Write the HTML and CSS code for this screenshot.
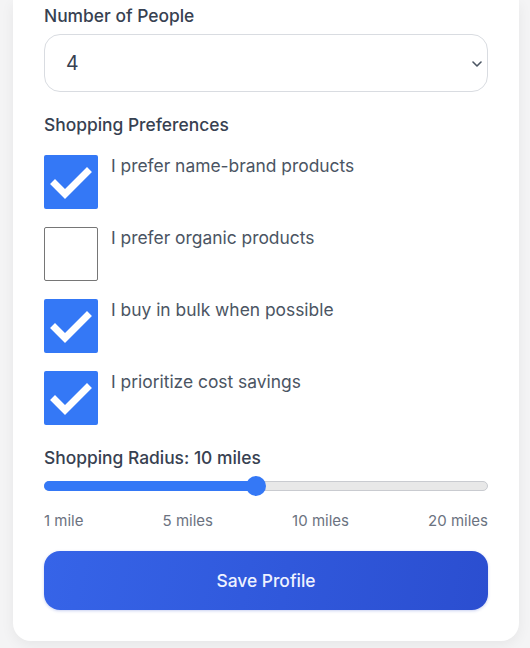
FILE: index.html
```html
<!DOCTYPE html>
<html lang="en">
<head>
<meta charset="utf-8">
<title>Profile</title>
<link rel="stylesheet" href="styles.css">
</head>
<body>
<div class="page">
  <div class="card">
    <div class="field">
      <div class="label">Number of People</div>
      <div class="select">
        <span class="select-value">4</span>
        <svg class="chev" width="10" height="6" viewBox="0 0 10 6"><path d="M1 1l4 4 4-4" fill="none" stroke="#4b5563" stroke-width="1.6" stroke-linecap="round" stroke-linejoin="round"/></svg>
      </div>
    </div>
    <div class="field">
      <div class="label">Shopping Preferences</div>
      <div class="checks">
        <div class="check-row">
          <span class="box checked"><svg width="54" height="54" viewBox="0 0 54 54"><path d="M11 29l10 10 22-22" fill="none" stroke="#fff" stroke-width="7" stroke-linecap="square"/></svg></span>
          <span class="check-text">I prefer name-brand products</span>
        </div>
        <div class="check-row">
          <span class="box"></span>
          <span class="check-text">I prefer organic products</span>
        </div>
        <div class="check-row">
          <span class="box checked"><svg width="54" height="54" viewBox="0 0 54 54"><path d="M11 29l10 10 22-22" fill="none" stroke="#fff" stroke-width="7" stroke-linecap="square"/></svg></span>
          <span class="check-text">I buy in bulk when possible</span>
        </div>
        <div class="check-row">
          <span class="box checked"><svg width="54" height="54" viewBox="0 0 54 54"><path d="M11 29l10 10 22-22" fill="none" stroke="#fff" stroke-width="7" stroke-linecap="square"/></svg></span>
          <span class="check-text">I prioritize cost savings</span>
        </div>
      </div>
    </div>
    <div class="field">
      <div class="label">Shopping Radius: 10 miles</div>
      <div class="slider">
        <div class="track">
          <div class="fill" style="width: 47.7%"></div>
          <div class="thumb" style="left: 47.7%"></div>
        </div>
      </div>
      <div class="ticks">
        <span>1 mile</span>
        <span>5 miles</span>
        <span>10 miles</span>
        <span>20 miles</span>
      </div>
    </div>
    <button class="save">Save Profile</button>
  </div>
</div>
</body>
</html>
```

FILE: styles.css
```css
* { box-sizing: border-box; }
html, body { margin: 0; padding: 0; }
body {
  background: #f4f4f5;
  font-family: Inter, "Noto Sans", sans-serif;
  color: #374151;
}
.page {
  padding: 0 11px 8px 13px;
}
.card {
  background: #fff;
  border-radius: 0 0 18px 18px;
  box-shadow: 0 4px 14px rgba(0,0,0,0.06);
  padding: 4px 31px 31px 31px;
  display: flex;
  flex-direction: column;
}
.field { display: flex; flex-direction: column; }
.label {
  font-size: 17.4px;
  line-height: 24px;
  font-weight: 500;
  color: #374151;
}
.select {
  position: relative;
  margin-top: 6px;
  height: 58px;
  border: 1px solid #d9dce1;
  border-radius: 16px;
  display: flex;
  align-items: center;
  padding: 0 21px;
  margin-bottom: 21px;
}
.select-value {
  font-size: 19.5px;
  color: #374151;
}
.chev {
  position: absolute;
  right: 5px;
  top: 26px;
}
.checks {
  margin-top: 18px;
  display: flex;
  flex-direction: column;
  gap: 18px;
  margin-bottom: 21px;
}
.check-row {
  display: flex;
  align-items: flex-start;
  gap: 13px;
}
.box {
  width: 54px;
  height: 54px;
  flex: none;
  border: 1px solid #767676;
  border-radius: 2px;
  background: #fff;
  display: block;
}
.box.checked {
  background: #3478f6;
  border: none;
}
.box svg { display: block; }
.check-text {
  font-size: 17.4px;
  line-height: 24px;
  color: #4b5563;
  margin-top: -1px;
}
.slider {
  margin-top: 6px;
  height: 20px;
  display: flex;
  align-items: center;
}
.track {
  position: relative;
  width: 100%;
  height: 10px;
  border-radius: 5px;
  background: #e8e8e8;
  border: 1px solid #c9cbd0;
}
.fill {
  position: absolute;
  left: -1px;
  top: -1px;
  height: 10px;
  border-radius: 5px 0 0 5px;
  background: #3478f6;
}
.thumb {
  position: absolute;
  top: 50%;
  width: 20px;
  height: 20px;
  margin: -10px 0 0 -10px;
  border-radius: 50%;
  background: #3478f6;
}
.ticks {
  margin-top: 15px;
  display: flex;
  justify-content: space-between;
  font-size: 15px;
  line-height: 20px;
  color: #6b7280;
}
.save {
  margin-top: 20px;
  height: 59px;
  border: none;
  border-radius: 16px;
  background: linear-gradient(100deg, #3664e8 0%, #2b4ed0 100%);
  color: #eef2ff;
  font-family: Inter, "Noto Sans", sans-serif;
  font-size: 17.4px;
  font-weight: 500;
  box-shadow: 0 1px 3px rgba(40,70,200,0.25);
}
```
